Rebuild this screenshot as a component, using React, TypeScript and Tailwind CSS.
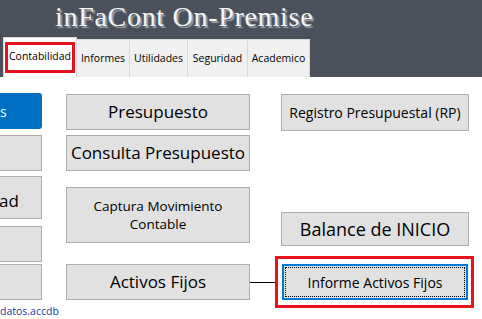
const tabs = [
  { label: "Informes", w: "w-[53px]" },
  { label: "Utilidades", w: "w-[58px]" },
  { label: "Seguridad", w: "w-[60px]" },
  { label: "Academico", w: "w-[62px]" },
];

const btn =
  "flex items-center justify-center bg-[#e1e1e1] border border-[#adadad] text-black whitespace-nowrap";

function App() {
  return (
    <div className="w-[482px] h-[319px] overflow-hidden bg-white font-['Open_Sans',sans-serif]">
      {/* header band */}
      <div className="h-[77px] bg-[#4b515c] flex flex-col">
        <div className="pl-[55px] pt-[1px] h-[36px] font-['Liberation_Serif',serif] text-[28px] leading-[32px] tracking-[0.7px] text-[#f4f4f4] [text-shadow:2px_2px_1px_#9aa0a8]">
          inFaCont On-Premise
        </div>
        <div className="flex items-end pl-[3px] flex-1 text-[10.5px] text-black">
          <div className="w-[74px] h-[40px] bg-white border border-b-0 border-[#d9d9d9] px-[1px] pt-[4px] pb-[4px] flex">
            <div className="flex-1 border-[3px] border-[#e5121b] flex items-center justify-center pb-[1px]">
              Contabilidad
            </div>
          </div>
          {tabs.map((t) => (
            <div
              key={t.label}
              className={`${t.w} h-[38px] bg-[#f0f0f0] border border-l-0 border-b-0 border-[#d9d9d9] flex items-center justify-center`}
            >
              {t.label}
            </div>
          ))}
        </div>
      </div>

      {/* body */}
      <div className="flex">
        {/* left cut-off column */}
        <div className="w-[42px] flex flex-col pt-[16px]">
          <div className="h-[36px] bg-[#0070c4] rounded-r-[3px] flex items-center text-white text-[14px]">
            s
          </div>
          <div className={`${btn} h-[36px] mt-[6px] border-l-0`} />
          <div className={`${btn} h-[43px] mt-[5px] border-l-0 !justify-start text-[17px] pt-[6px]`}>
            <span className="-ml-[1px]">ad</span>
          </div>
          <div className={`${btn} h-[36px] mt-[7px] border-l-0`} />
          <div className={`${btn} h-[36px] mt-[2px] border-l-0`} />
          <div className="mt-[4px] text-[10.5px] leading-[14px] text-[#1c3aa6] whitespace-nowrap">
            datos.accdb
          </div>
        </div>

        {/* main area */}
        <div className="ml-[24px] flex flex-col pt-[17px]">
          <div className="flex">
            <div className="w-[184px] flex flex-col">
              <div className={`${btn} h-[36px] text-[17px]`}>Presupuesto</div>
              <div className={`${btn} h-[36px] mt-[5px] text-[17px]`}>Consulta Presupuesto</div>
              <div className={`${btn} h-[56px] mt-[16px] text-[13.5px] leading-[18px] flex-col`}>
                <span>Captura Movimiento</span>
                <span>Contable</span>
              </div>
            </div>
            <div className="ml-[31px] w-[188px] flex flex-col">
              <div className={`${btn} h-[37px] text-[14px]`}>Registro Presupuestal (RP)</div>
              <div className={`${btn} h-[34px] mt-[81px] text-[18px]`}>Balance de INICIO</div>
            </div>
          </div>

          <div className="flex items-center mt-[10px]">
            <div className={`${btn} w-[184px] h-[36px] text-[17px]`}>Activos Fijos</div>
            <div className="w-[25px] h-[1px] bg-black" />
            <div className="w-[199px] h-[52px] border-[3px] border-[#e5121b] pl-[4px] pt-[5px]">
              <div className="relative w-[186px] h-[36px] bg-[#e1e1e1] border-2 border-[#0078d7] flex items-center justify-center text-[14px] text-black">
                <div className="absolute inset-[1px] border border-dotted border-black" />
                Informe Activos Fijos
              </div>
            </div>
          </div>
        </div>
      </div>
    </div>
  );
}

export default App;
